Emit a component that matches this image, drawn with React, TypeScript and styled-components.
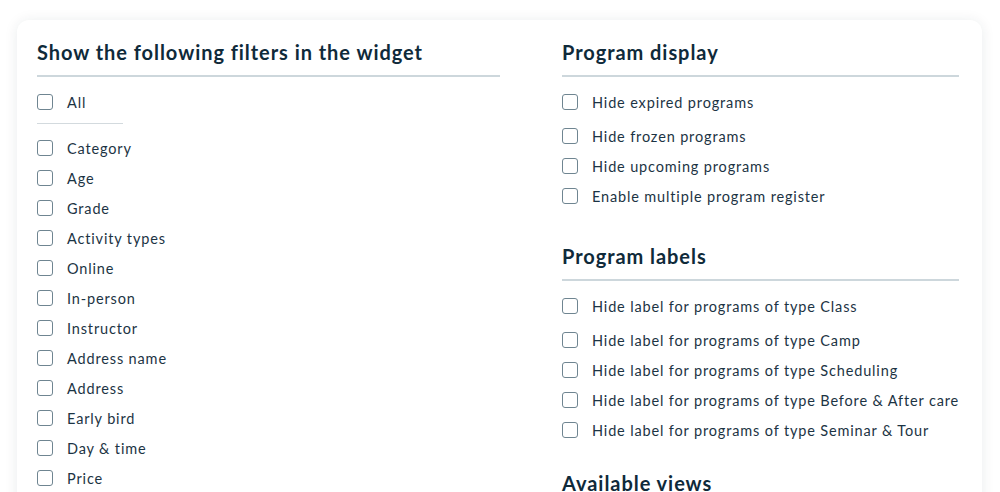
import React from 'react';
import styled, { createGlobalStyle } from 'styled-components';

const GlobalStyle = createGlobalStyle`
  body {
    margin: 0;
    background: #ffffff;
    font-family: 'Lato', 'Noto Sans', sans-serif;
  }
`;

const Page = styled.div`
  width: 1000px;
  height: 492px;
  overflow: hidden;
  padding-top: 20px;
  box-sizing: border-box;
`;

const Card = styled.div`
  margin: 0 18px 0 17px;
  padding: 18px 24px 0 20px;
  height: 520px;
  background: #ffffff;
  border-radius: 12px;
  box-shadow: 0 1px 14px rgba(20, 40, 60, 0.09);
  display: grid;
  grid-template-columns: 463px 1fr;
  column-gap: 62px;
  align-items: start;
`;

const Column = styled.div`
  display: flex;
  flex-direction: column;
`;

const Section = styled.section<{ $top?: number }>`
  margin-top: ${(p) => p.$top ?? 0}px;
`;

const Heading = styled.h2`
  margin: 0;
  font-size: 20px;
  line-height: 28px;
  font-weight: 700;
  color: #0f2a3a;
  letter-spacing: 0.95px;
  white-space: nowrap;
`;

const Divider = styled.hr`
  margin: 9px 0 10px;
  border: none;
  height: 2px;
  background: #cdd7dc;
`;

const ShortDivider = styled.hr`
  margin: 6px 0 9px;
  width: 86px;
  border: none;
  height: 1px;
  background: #d3dade;
`;

const Row = styled.label<{ $first?: boolean }>`
  display: flex;
  align-items: center;
  height: 30px;
  margin-bottom: ${(p) => (p.$first ? 4 : 0)}px;
  cursor: pointer;
`;

const Box = styled.span`
  width: 16px;
  height: 16px;
  box-sizing: border-box;
  border: 1.5px solid #6f8591;
  border-radius: 3px;
  margin-right: 14px;
  flex-shrink: 0;
`;

const Label = styled.span`
  font-size: 14.5px;
  color: #1c3444;
  letter-spacing: 0.85px;
  white-space: nowrap;
`;

const filters = [
  'Category',
  'Age',
  'Grade',
  'Activity types',
  'Online',
  'In-person',
  'Instructor',
  'Address name',
  'Address',
  'Early bird',
  'Day & time',
  'Price',
];

const display = [
  'Hide expired programs',
  'Hide frozen programs',
  'Hide upcoming programs',
  'Enable multiple program register',
];

const labels = [
  'Class',
  'Camp',
  'Scheduling',
  'Before & After care',
  'Seminar & Tour',
];

const Check = ({ text, first }: { text: string; first?: boolean }) => (
  <Row $first={first}>
    <Box />
    <Label>{text}</Label>
  </Row>
);

const App = () => (
  <>
    <GlobalStyle />
    <Page>
      <Card>
        <Column>
          <Heading>Show the following filters in the widget</Heading>
          <Divider />
          <Check text="All" />
          <ShortDivider />
          {filters.map((f) => (
            <Check key={f} text={f} />
          ))}
        </Column>
        <Column>
          <Section>
            <Heading>Program display</Heading>
            <Divider />
            {display.map((d, i) => (
              <Check key={d} text={d} first={i === 0} />
            ))}
          </Section>
          <Section $top={31}>
            <Heading>Program labels</Heading>
            <Divider />
            {labels.map((l, i) => (
              <Check key={l} text={`Hide label for programs of type ${l}`} first={i === 0} />
            ))}
          </Section>
          <Section $top={24}>
            <Heading>Available views</Heading>
          </Section>
        </Column>
      </Card>
    </Page>
  </>
);

export default App;
